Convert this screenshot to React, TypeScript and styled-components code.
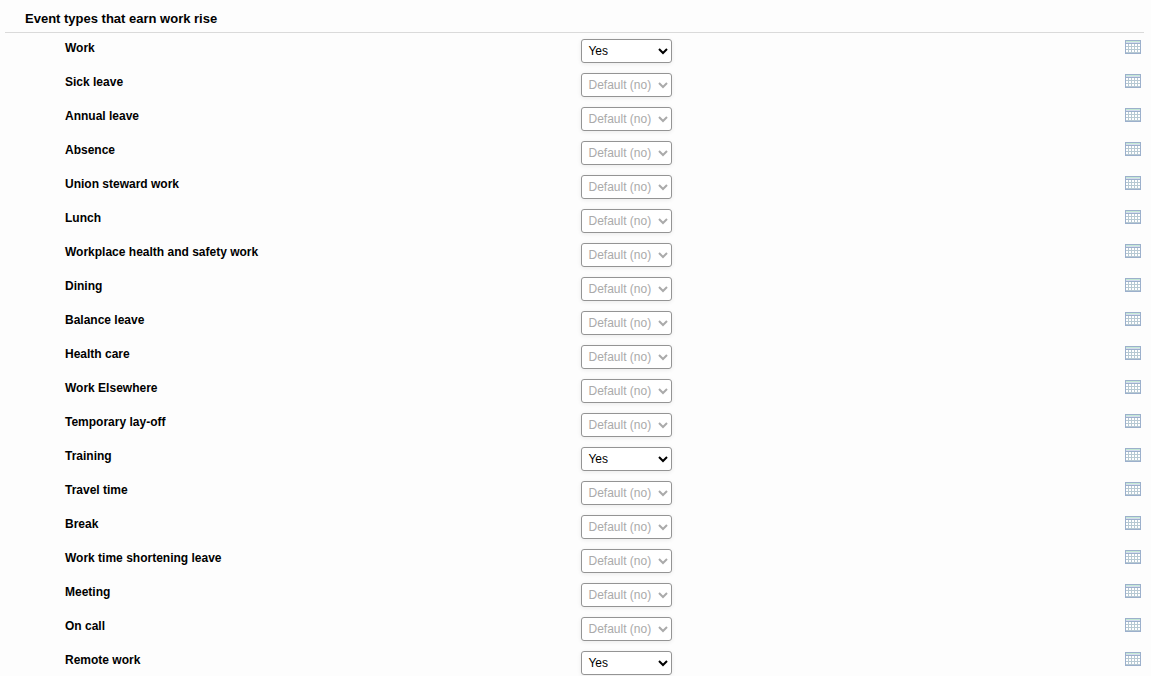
import React, { useState } from "react";
import styled, { createGlobalStyle } from "styled-components";

const GlobalStyle = createGlobalStyle`
  * { box-sizing: border-box; }
  body {
    margin: 0;
    background: #fdfdfd;
    color: #000;
    font-family: Arial, "Liberation Sans", sans-serif;
    font-size: 12px;
  }
`;

const Section = styled.section`
  padding: 5px 7px 0 5px;
`;

const Heading = styled.h2`
  margin: 0;
  padding: 6px 20px 5px;
  border-bottom: 1px solid #dadada;
  font-size: 13px;
  line-height: 16px;
  font-weight: bold;
`;

const List = styled.div`
  padding: 0 3px 0 60px;
`;

const Row = styled.div`
  display: grid;
  grid-template-columns: 48% 1fr auto;
  align-items: start;
  height: 34px;
  padding-top: 6px;
`;

const Label = styled.label`
  padding-top: 1px;
  font-weight: bold;
  line-height: 16px;
`;

const Select = styled.select`
  justify-self: start;
  width: 91px;
  height: 24px;
  margin: 0;
  padding: 2px;
  border: 1px solid #949494;
  border-radius: 3px;
  background-color: #fff;
  color: #000;
  font: 12px Arial, "Liberation Sans", sans-serif;
  box-shadow: 0 1px 4px rgba(0, 0, 0, 0.08);

  &:disabled {
    opacity: 1;
    color: #aaa;
  }
`;

const IconButton = styled.button`
  display: block;
  margin: 1px 0 0;
  padding: 0;
  border: 0;
  background: none;
  cursor: pointer;

  svg { display: block; }
`;

function CalendarIcon() {
  return (
    <svg width="16" height="14" viewBox="0 0 16 14" shapeRendering="crispEdges" aria-hidden="true">
      <rect width="16" height="14" fill="#9cb0cc" />
      <rect x="1" y="1" width="14" height="1" fill="#c5ead5" />
      <rect x="1" y="2" width="14" height="1" fill="#d5dcee" />
      <rect x="1" y="4" width="14" height="9" fill="#b7c9d3" />
      {[4, 7, 10].map((y) =>
        [1, 4, 7, 10, 13].map((x) => (
          <rect key={`${x}-${y}`} x={x} y={y} width="2" height="2" fill="#fff" />
        ))
      )}
    </svg>
  );
}

const events: { name: string; earns?: boolean }[] = [
  { name: "Work", earns: true },
  { name: "Sick leave" },
  { name: "Annual leave" },
  { name: "Absence" },
  { name: "Union steward work" },
  { name: "Lunch" },
  { name: "Workplace health and safety work" },
  { name: "Dining" },
  { name: "Balance leave" },
  { name: "Health care" },
  { name: "Work Elsewhere" },
  { name: "Temporary lay-off" },
  { name: "Training", earns: true },
  { name: "Travel time" },
  { name: "Break" },
  { name: "Work time shortening leave" },
  { name: "Meeting" },
  { name: "On call" },
  { name: "Remote work", earns: true },
];

function EventRow({ name, earns, id }: { name: string; earns?: boolean; id: string }) {
  const [value, setValue] = useState(earns ? "yes" : "default");
  return (
    <Row>
      <Label htmlFor={id}>{name}</Label>
      <Select id={id} value={value} disabled={!earns} onChange={(e) => setValue(e.target.value)}>
        <option value="default">Default (no)</option>
        <option value="yes">Yes</option>
        <option value="no">No</option>
      </Select>
      <IconButton type="button" aria-label={`Calendar for ${name}`}>
        <CalendarIcon />
      </IconButton>
    </Row>
  );
}

export default function App() {
  return (
    <>
      <GlobalStyle />
      <Section>
        <Heading>Event types that earn work rise</Heading>
        <List>
          {events.map((event, i) => (
            <EventRow key={event.name} id={`event-${i}`} {...event} />
          ))}
        </List>
      </Section>
    </>
  );
}
